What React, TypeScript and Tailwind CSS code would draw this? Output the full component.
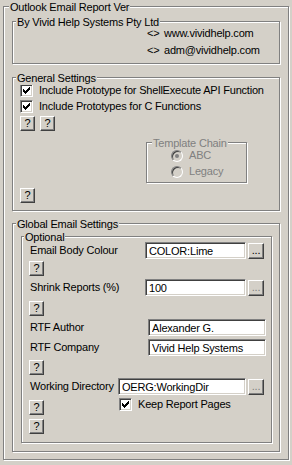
import React from 'react'

const etched = 'relative border border-[#808080] shadow-[inset_1px_1px_0_#ffffff,1px_1px_0_#ffffff]'
const raised = 'border border-t-white border-l-white border-r-[#404040] border-b-[#404040] shadow-[inset_-1px_-1px_0_#808080] bg-[#d4d0c8]'
const sunken = 'border border-t-[#808080] border-l-[#808080] border-r-white border-b-white shadow-[inset_1px_1px_0_#404040,inset_-1px_-1px_0_#d4d0c8]'

interface GroupProps {
    title: string
    titleClass: string
    className: string
    children?: React.ReactNode
}

const GroupBox: React.FC<GroupProps> = ({ title, titleClass, className, children }) => (
    <div className={`${etched} ${className}`}>
        <span className={`absolute top-[-6px] px-[1px] bg-[#d4d0c8] whitespace-nowrap ${titleClass}`}>
            {title}
        </span>
        {children}
    </div>
)

const HelpButton = ({ className = '' }: { className?: string }) => (
    <button className={`w-[15px] h-[15px] shrink-0 flex items-center justify-center text-[11px] leading-none ${raised} ${className}`}>
        ?
    </button>
)

const DotsButton = ({ dim }: { dim?: boolean }) => (
    <button className={`ml-[2px] self-end w-[16px] h-[16px] shrink-0 flex items-end justify-center pb-[2px] text-[11px] leading-none ${raised} ${dim ? 'text-[#808080]' : 'text-black'}`}>
        ...
    </button>
)

const CheckBox = () => (
    <span className={`w-[13px] h-[13px] shrink-0 flex items-center justify-center bg-white ${sunken}`}>
        <svg width="7" height="7" viewBox="0 0 7 7" shapeRendering="crispEdges">
            <path d="M0 2h1v3H0zM1 3h1v3H1zM2 4h1v3H2zM3 3h1v3H3zM4 2h1v3H4zM5 1h1v3H5zM6 0h1v3H6z" fill="#000" />
        </svg>
    </span>
)

const Radio = ({ checked }: { checked?: boolean }) => (
    <span className={`w-[12px] h-[12px] shrink-0 rounded-full flex items-center justify-center bg-[#d4d0c8] ${sunken}`}>
        {checked && <span className="w-[4px] h-[4px] rounded-full bg-[#808080]" />}
    </span>
)

const TextField = ({ value, width }: { value: string; width: string }) => (
    <input
        readOnly
        value={value}
        className={`${width} h-[17px] px-[3px] bg-white text-black outline-none ${sunken}`}
    />
)

export default function App() {
    return (
        <div className="w-[292px] h-[465px] overflow-hidden bg-[#d4d0c8] pl-[3px] pt-[6px] text-[11px] leading-[13px] tracking-[-0.2px] text-black font-['Liberation_Sans',Arial,sans-serif]">
            <GroupBox title="Outlook Email Report Ver" titleClass="left-[5px]" className="w-[286px] h-[454px] pl-[8px] flex flex-col items-start">
                <GroupBox title="By Vivid Help Systems Pty Ltd" titleClass="left-[3px]" className="mt-[14px] w-[268px] h-[43px] pt-[5px] pl-[134px] flex flex-col gap-[4px]">
                    <div className="flex">
                        <span className="w-[17px]">&lt;&gt;</span>
                        <span>www.vividhelp.com</span>
                    </div>
                    <div className="flex">
                        <span className="w-[17px]">&lt;&gt;</span>
                        <span>adm@vividhelp.com</span>
                    </div>
                </GroupBox>

                <GroupBox title="General Settings" titleClass="left-[3px]" className="mt-[13px] w-[268px] h-[134px] pt-[6px] pl-[7px] flex flex-col items-start">
                    <label className="flex items-center h-[13px] gap-[6px] whitespace-nowrap">
                        <CheckBox />
                        <span>Include Prototype for ShellExecute API Function</span>
                    </label>
                    <label className="mt-[3px] flex items-center h-[13px] gap-[6px] whitespace-nowrap">
                        <CheckBox />
                        <span>Include Prototypes for C Functions</span>
                    </label>
                    <div className="mt-[3px] flex gap-[5px]">
                        <HelpButton />
                        <HelpButton />
                    </div>
                    <GroupBox title="Template Chain" titleClass="left-[5px] text-[#808080]" className="mt-[11px] ml-[126px] w-[101px] h-[41px] pt-[6px] pl-[24px] flex flex-col gap-[3px] text-[#808080]">
                        <div className="flex items-center h-[13px] gap-[6px]">
                            <Radio checked />
                            <span>ABC</span>
                        </div>
                        <div className="flex items-center h-[13px] gap-[6px]">
                            <Radio />
                            <span>Legacy</span>
                        </div>
                    </GroupBox>
                    <HelpButton className="mt-[5px]" />
                </GroupBox>

                <GroupBox title="Global Email Settings" titleClass="left-[3px]" className="mt-[12px] w-[268px] h-[229px] pl-[8px] flex flex-col items-start">
                    <GroupBox title="Optional" titleClass="left-[2px]" className="mt-[12px] w-[251px] h-[207px] pl-[7px] flex flex-col items-start">
                        <div className="mt-[5px] flex items-center h-[17px]">
                            <span className="w-[116px] pl-[1px]">Email Body Colour</span>
                            <TextField value="COLOR:Lime" width="w-[101px]" />
                            <DotsButton />
                        </div>
                        <HelpButton className="mt-[2px]" />
                        <div className="mt-[3px] flex items-center h-[17px]">
                            <span className="w-[116px] pl-[1px]">Shrink Reports (%)</span>
                            <TextField value="100" width="w-[101px]" />
                            <DotsButton dim />
                        </div>
                        <HelpButton className="mt-[5px]" />
                        <div className="mt-[3px] flex items-center h-[17px]">
                            <span className="w-[119px] pl-[1px]">RTF Author</span>
                            <TextField value="Alexander G." width="w-[118px]" />
                        </div>
                        <div className="mt-[3px] flex items-center h-[17px]">
                            <span className="w-[119px] pl-[1px]">RTF Company</span>
                            <TextField value="Vivid Help Systems" width="w-[118px]" />
                        </div>
                        <HelpButton className="mt-[4px]" />
                        <div className="mt-[3px] flex items-center h-[17px]">
                            <span className="w-[89px] pl-[1px] whitespace-nowrap">Working Directory</span>
                            <TextField value="OERG:WorkingDir" width="w-[128px]" />
                            <DotsButton dim />
                        </div>
                        <div className="flex items-start">
                            <HelpButton className="mt-[5px]" />
                            <label className="mt-[3px] ml-[75px] flex items-center h-[13px] gap-[6px] whitespace-nowrap">
                                <CheckBox />
                                <span>Keep Report Pages</span>
                            </label>
                        </div>
                        <HelpButton className="mt-[4px]" />
                    </GroupBox>
                </GroupBox>
            </GroupBox>
        </div>
    )
}
